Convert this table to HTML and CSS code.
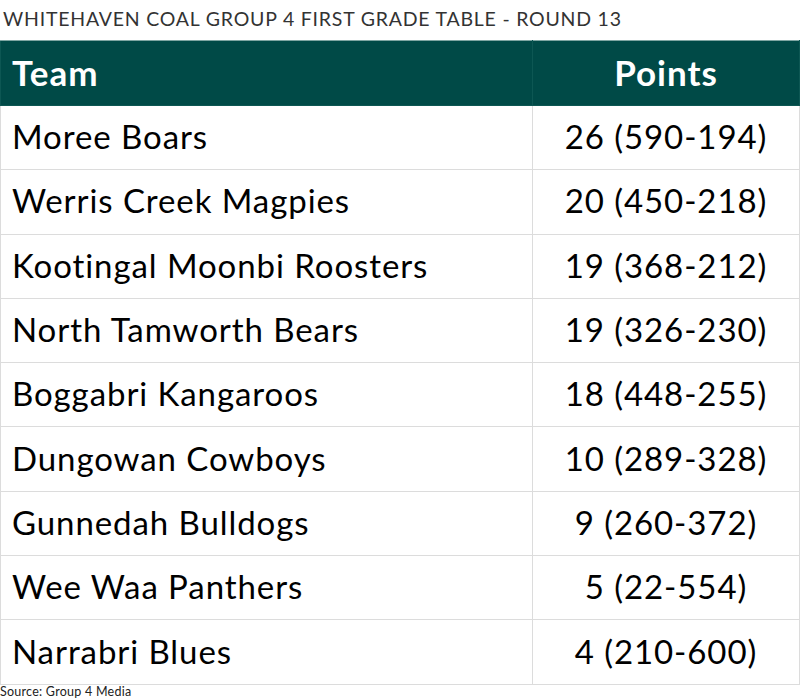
FILE: index.html
```html
<!DOCTYPE html>
<html>
<head>
<meta charset="utf-8">
<link rel="stylesheet" href="styles.css">
</head>
<body>
<div class="wrap">
  <div class="title">WHITEHAVEN COAL GROUP 4 FIRST GRADE TABLE - ROUND 13</div>
  <table class="ladder">
    <thead>
      <tr><th class="team">Team</th><th class="pts">Points</th></tr>
    </thead>
    <tbody>
      <tr><td class="team">Moree Boars</td><td class="pts">26 (590-194)</td></tr>
      <tr><td class="team">Werris Creek Magpies</td><td class="pts">20 (450-218)</td></tr>
      <tr><td class="team">Kootingal Moonbi Roosters</td><td class="pts">19 (368-212)</td></tr>
      <tr><td class="team">North Tamworth Bears</td><td class="pts">19 (326-230)</td></tr>
      <tr><td class="team">Boggabri Kangaroos</td><td class="pts">18 (448-255)</td></tr>
      <tr><td class="team">Dungowan Cowboys</td><td class="pts">10 (289-328)</td></tr>
      <tr><td class="team">Gunnedah Bulldogs</td><td class="pts">9 (260-372)</td></tr>
      <tr><td class="team">Wee Waa Panthers</td><td class="pts">5 (22-554)</td></tr>
      <tr><td class="team">Narrabri Blues</td><td class="pts">4 (210-600)</td></tr>
    </tbody>
  </table>
  <div class="source">Source: Group 4 Media</div>
</div>
</body>
</html>
```
FILE: styles.css
```css
html, body {
  margin: 0;
  padding: 0;
  background: #fff;
}
body {
  font-family: Lato, "Liberation Sans", sans-serif;
  color: #000;
  font-variant-ligatures: none;
}
.wrap {
  width: 800px;
}
.title {
  font-size: 19.5px;
  color: #333;
  line-height: 24px;
  padding: 7px 0 0 3px;
  height: 40px;
  box-sizing: border-box;
  letter-spacing: 0.04em;
  white-space: nowrap;
}
.ladder {
  width: 800px;
  border-collapse: collapse;
  table-layout: fixed;
}
.ladder th, .ladder td {
  border: 1px solid #dcdcdc;
  padding: 0 11px 3px 11px;
  white-space: nowrap;
  letter-spacing: 0.028em;
}
.ladder th {
  background: #004a47;
  color: #fff;
  font-weight: 700;
  font-size: 35px;
  height: 61px;
  border-color: #0d5753;
  border-top-color: #7fa6a3;
}
.ladder td {
  font-size: 33px;
  height: 60.3px;
}
.ladder .team {
  text-align: left;
  width: 532px;
  box-sizing: border-box;
}
.ladder .pts {
  text-align: center;
}
.source {
  font-size: 12.5px;
  color: #222;
  line-height: 14px;
  letter-spacing: 0.02em;
}
```
